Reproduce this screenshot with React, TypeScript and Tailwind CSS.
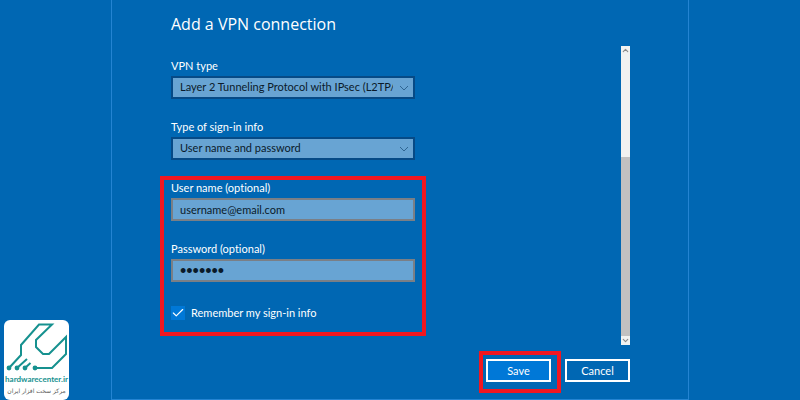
import { Check, ChevronDown, ChevronUp } from 'lucide-react';

const labelClass = 'mb-0.5 leading-4 text-white';
const fieldClass = 'h-[23px] w-full border-2 border-[#7a7f86] bg-[#68a4d3] px-[7px] text-[#0a1a2a] outline-none';

interface SelectFieldProps {
  id: string;
  label: string;
  value: string;
}

function SelectField({ id, label, value }: SelectFieldProps) {
  return (
    <div className="flex flex-col">
      <label htmlFor={id} className={labelClass}>{label}</label>
      <div className="grid items-center">
        <select
          id={id}
          defaultValue={value}
          className="col-start-1 row-start-1 h-[23px] w-full appearance-none border-2 border-[#064a86] bg-[#68a4d3] pl-[7px] pr-5 text-[#0a1a2a] outline-none"
        >
          <option>{value}</option>
        </select>
        <svg viewBox="0 0 10 6" className="pointer-events-none col-start-1 row-start-1 mr-1.5 w-2.5 justify-self-end" fill="none" stroke="#2f6591">
          <path d="M1 1 L5 5 L9 1" />
        </svg>
      </div>
    </div>
  );
}

function Scrollbar() {
  return (
    <div className="flex w-[9px] flex-col bg-[#f1f2f1]">
      <ChevronUp size={9} strokeWidth={3} className="text-[#8a8a8a]" />
      <div className="h-[102px]" />
      <div className="flex-1 bg-[#c1c1c1]" />
      <ChevronDown size={9} strokeWidth={3} className="text-[#8a8a8a]" />
    </div>
  );
}

function Logo() {
  return (
    <div className="flex w-[65px] flex-col items-center rounded-md bg-white pb-1">
      <svg viewBox="0 0 65 54" className="w-full" fill="none" stroke="#16918f" strokeWidth="2">
        <path d="M5 48 L17 35 V25 L35 4.500 H48 L32 20 V27 L39 34 H45 L62 17 V34 L48 48 H31" />
        <path d="M13 48 L23 39 M21 48 L26.500 43" />
        <g fill="#16918f" stroke="none">
          <circle cx="5" cy="48" r="2.400" />
          <circle cx="13" cy="48" r="2.400" />
          <circle cx="21" cy="48" r="2.400" />
          <circle cx="31" cy="48" r="2.400" />
        </g>
      </svg>
      <span className="text-[8px] font-bold leading-[11px] text-[#16918f]">hardwarecenter.ir</span>
      <span dir="rtl" className="whitespace-nowrap font-['DejaVu_Sans',sans-serif] text-[6px] leading-[11px] text-[#555555]">مرکز سخت افزار ایران</span>
    </div>
  );
}

export default function App() {
  return (
    <div className="flex min-h-screen bg-[#0067b3] font-['Lato',sans-serif] text-[11px] [font-variant-ligatures:none]">
      <aside className="flex w-[111px] shrink-0 items-end pl-1">
        <Logo />
      </aside>

      <main className="flex flex-1 flex-col border-x border-b border-[#2484d2] pl-12 pr-[58px]">
        <h1 className="pl-[11px] pt-3 font-['Open_Sans',sans-serif] text-base leading-6 text-white">Add a VPN connection</h1>

        <div className="mt-2.5 flex justify-between">
          <form className="flex w-[266px] flex-col pb-[9px] pt-3">
            <div className="flex flex-col gap-5 px-[11px]">
              <SelectField id="vpn-type" label="VPN type" value="Layer 2 Tunneling Protocol with IPsec (L2TP/IPsec)" />
              <SelectField id="sign-in" label="Type of sign-in info" value="User name and password" />
            </div>

            <div className="mt-4 flex flex-col gap-5 border-4 border-[#f11720] px-[7px] pb-3">
              <div className="flex flex-col">
                <label htmlFor="user" className={labelClass}>User name (optional)</label>
                <input id="user" type="text" defaultValue="username@email.com" className={fieldClass} />
              </div>
              <div className="flex flex-col">
                <label htmlFor="pass" className={labelClass}>Password (optional)</label>
                <input
                  id="pass"
                  type="password"
                  defaultValue="1234567"
                  className={`${fieldClass} pt-0.5 font-['Liberation_Sans',sans-serif] text-lg leading-4`}
                />
              </div>
              <label className="mt-1 flex items-center gap-1.5 leading-[14px] text-white">
                <span className="grid">
                  <input type="checkbox" defaultChecked className="col-start-1 row-start-1 size-3.5 appearance-none bg-[#0078d7]" />
                  <Check size={14} strokeWidth={2} className="pointer-events-none col-start-1 row-start-1" />
                </span>
                Remember my sign-in info
              </label>
            </div>
          </form>

          <Scrollbar />
        </div>

        <div className="mt-1.5 flex items-start justify-end gap-1">
          <div className="border-4 border-[#f11720] pb-[7px] pl-[3px] pr-1.5 pt-1">
            <button type="button" className="block h-[23px] w-[65px] border-2 border-white bg-[#0078d7] leading-4 text-white">Save</button>
          </div>
          <button type="button" className="mt-2 h-[23px] w-[65px] border-2 border-white leading-4 text-white">Cancel</button>
        </div>
      </main>

      <div className="w-[111px] shrink-0" />
    </div>
  );
}
